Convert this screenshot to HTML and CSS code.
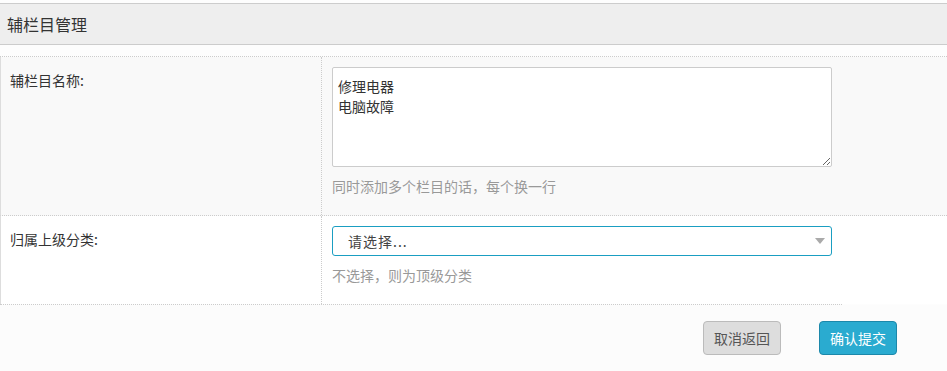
FILE: index.html
```html
<!DOCTYPE html>
<html lang="zh-CN">
<head>
    <meta charset="UTF-8">
    <meta name="viewport" content="width=device-width, initial-scale=1.0">
    <title>辅栏目管理</title>
    <link rel="stylesheet" href="styles.css">
</head>
<body>
    <div class="page-head">
        <h2>辅栏目管理</h2>
    </div>
    <form class="form" action="">
        <div class="row row-alt">
            <div class="label">辅栏目名称:</div>
            <div class="field">
                <textarea class="textarea">修理电器
电脑故障</textarea>
                <p class="hint">同时添加多个栏目的话，每个换一行</p>
            </div>
        </div>
        <div class="row row-last">
            <div class="label">归属上级分类:</div>
            <div class="field">
                <div class="select-wrap">
                    <select class="select">
                        <option>请选择...</option>
                    </select>
                </div>
                <p class="hint">不选择，则为顶级分类</p>
            </div>
        </div>
        <div class="rule"></div>
        <div class="actions">
            <button type="button" class="btn btn-cancel">取消返回</button>
            <button type="submit" class="btn btn-submit">确认提交</button>
        </div>
    </form>
</body>
</html>
```

FILE: styles.css
```css
* {
    margin: 0;
    padding: 0;
    box-sizing: border-box;
    font-family: 'Noto Sans CJK SC', 'Noto Sans', sans-serif;
}

html,
body {
    height: 100%;
}

body {
    padding-top: 3px;
    background: #fdfdfd;
    color: #222;
    font-size: 14px;
    display: flex;
    flex-direction: column;
}

.page-head {
    height: 42px;
    background: #eee;
    border-top: 1px solid #ccc;
    border-bottom: 1px solid #ccc;
    display: flex;
    align-items: center;
    padding-left: 7px;
}

.page-head h2 {
    font-size: 16px;
    font-weight: normal;
    color: #333;
    line-height: 20px;
}

.form {
    margin-top: 11px;
    border-top: 1px dotted #ccc;
    flex: 1;
    display: flex;
    flex-direction: column;
}

.row {
    display: grid;
    grid-template-columns: 321px 1fr;
    border-left: 1px solid #ddd;
    border-bottom: 1px dotted #ccc;
    background: #fff;
}

.row-alt {
    background: #f9f9f9;
}

.row-last {
    border-bottom: none;
}

.label {
    border-right: 1px dotted #ccc;
    padding: 13px 0 0 9px;
    line-height: 20px;
    color: #333;
}

.field {
    padding: 10px 0 19px 10px;
}

.textarea {
    display: block;
    width: 500px;
    height: 100px;
    padding: 8px 5px;
    border: 1px solid #ccc;
    border-radius: 2px;
    background: #fff;
    font-size: 14px;
    line-height: 20px;
    color: #333;
    outline: none;
}

.hint {
    margin-top: 9px;
    line-height: 20px;
    color: #999;
}

.select-wrap {
    position: relative;
    width: 500px;
}

.select-wrap::after {
    content: "";
    position: absolute;
    right: 7px;
    top: 12px;
    border-left: 5px solid transparent;
    border-right: 5px solid transparent;
    border-top: 6px solid #aaa;
    pointer-events: none;
}

.select {
    display: block;
    width: 100%;
    height: 30px;
    padding: 0 30px 0 15px;
    border: 1px solid #1a9ec2;
    border-radius: 3px;
    background: #fff;
    font-size: 14px;
    color: #444;
    letter-spacing: 1px;
    appearance: none;
    -webkit-appearance: none;
    outline: none;
}

.rule {
    width: 842px;
    border-top: 1px dotted #ccc;
}

.actions {
    flex: 1;
    background: #fcfcfc;
    display: flex;
    justify-content: flex-end;
    align-items: flex-start;
    gap: 38px;
    padding: 16px 50px 0 0;
}

.btn {
    width: 78px;
    height: 34px;
    border-radius: 4px;
    font-size: 14px;
    cursor: pointer;
}

.btn-cancel {
    background: #ddd;
    border: 1px solid #bbb;
    color: #555;
}

.btn-submit {
    background: #2aabd0;
    border: 1px solid #1c88aa;
    color: #fff;
}
```
